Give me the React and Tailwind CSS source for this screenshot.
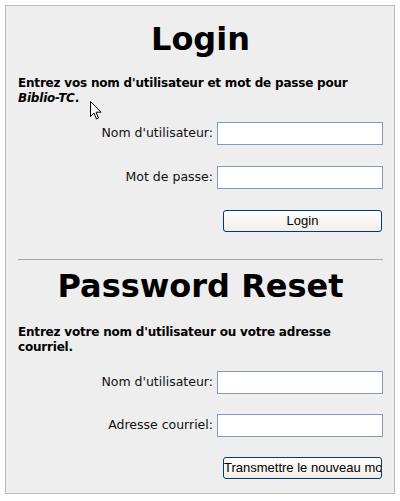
import React from 'react';

const Field = ({ label, type = 'text' }) => (
  <div className="flex items-center justify-end h-[23px]">
    <label className="text-[12.5px] text-[#111] mr-[4px]" style={{ fontFamily: 'Tahoma, "DejaVu Sans", sans-serif' }}>
      {label}
    </label>
    <input
      type={type}
      className="w-[166px] h-[23px] bg-white border border-[#7f9db9] outline-none"
    />
  </div>
);

const Button = ({ children }) => (
  <div className="flex justify-end">
    <button className="w-[159px] h-[22px] mr-[1px] rounded-[3px] border border-[#003c74] bg-gradient-to-b from-white to-[#f3ede8] text-[13px] text-black overflow-hidden whitespace-nowrap leading-[20px] font-['Liberation_Sans',Arial,sans-serif]">
      {children}
    </button>
  </div>
);

// mouse pointer captured in the screenshot
const Cursor = () => (
  <svg className="absolute left-[90px] top-[101px]" width="12" height="19" viewBox="0 0 12 19">
    <path d="M0.5 0.5 L0.5 15.5 L4 12 L6.5 18 L8.5 17 L6 11.2 L11 11.2 Z" fill="white" stroke="black" strokeWidth="1" strokeLinejoin="miter" />
  </svg>
);

export default function App() {
  return (
    <div className="relative w-[400px] h-[501px] bg-white pt-[5px] pl-[5px]">
      <div className="w-[390px] h-[489px] border border-[#bbbbbb] bg-[#eeeeee] pl-[12px] pr-[11px] font-['DejaVu_Sans',Verdana,sans-serif]">
        {/* Login */}
        <h1 className="text-[32px] font-bold text-center text-black leading-none mt-[17px]">Login</h1>
        <p className="text-[12px] tracking-[-0.2px] font-bold text-black leading-[15px] mt-[21px]">
          Entrez vos nom d'utilisateur et mot de passe pour <em>Biblio-TC</em>.
        </p>
        <div className="mt-[16px] flex flex-col gap-[21px]">
          <Field label="Nom d'utilisateur:" />
          <Field label="Mot de passe:" type="password" />
          <Button>Login</Button>
        </div>

        <hr className="mt-[27px] border-t border-[#aaa99f]" />

        {/* Password reset */}
        <h1 className="text-[32px] font-bold text-center text-black leading-none mt-[10px]">Password Reset</h1>
        <p className="text-[12px] tracking-[-0.2px] font-bold text-black leading-[15px] mt-[23px]">
          Entrez votre nom d'utilisateur ou votre adresse courriel.
        </p>
        <div className="mt-[16px] flex flex-col gap-[20px]">
          <Field label="Nom d'utilisateur:" />
          <Field label="Adresse courriel:" />
          <Button>Transmettre le nouveau mot de passe</Button>
        </div>
      </div>
      <Cursor />
    </div>
  );
}
